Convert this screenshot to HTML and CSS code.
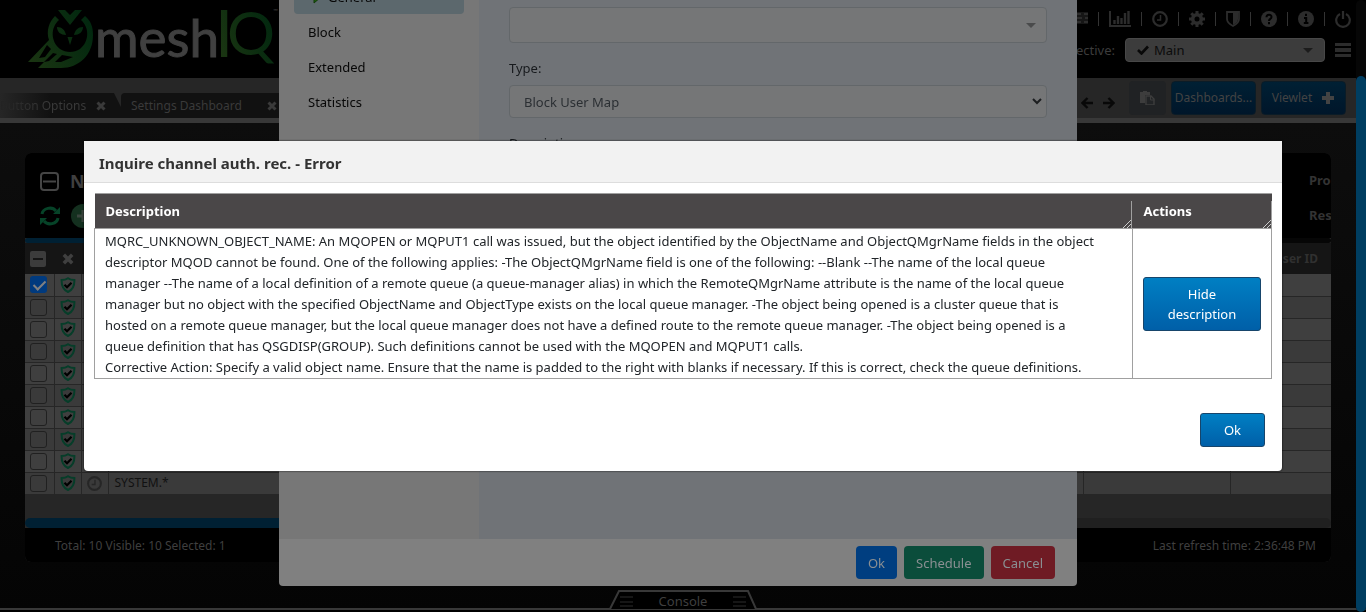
FILE: index.html
```html
<!DOCTYPE html>
<html lang="en">
<head>
<meta charset="utf-8">
<title>meshIQ</title>
<link rel="stylesheet" href="styles.css">
</head>
<body>
<svg class="defs" aria-hidden="true">
  <symbol id="shield-check" viewBox="0 0 16 16"><path d="M8 1.2C6 2.6 4 3 1.6 3c-.2 6 1.400 9.800 6.400 12C13 12.800 14.600 9 14.400 3 12 3 10 2.600 8 1.200z" fill="none" stroke="#063d29" stroke-width="2"/><path d="M4.500 7.800l2.500 2.500 4.500-4.600" fill="none" stroke="#000" stroke-width="2.200"/></symbol>
  <symbol id="cross" viewBox="0 0 10 10"><path d="M1.500 1.500l7 7M8.500 1.500l-7 7" stroke="currentColor" stroke-width="3"/></symbol>
  <symbol id="clock" viewBox="0 0 16 16"><circle cx="8" cy="8" r="6.800" fill="none" stroke="currentColor" stroke-width="2.200"/><path d="M8.500 4v5H5" fill="none" stroke="currentColor" stroke-width="1.500"/></symbol>
</svg>
<div class="app">
  <header class="top">
    <svg class="logo" viewBox="0 0 290 78" role="img" aria-label="meshIQ">
      <defs><linearGradient id="leaf" gradientUnits="userSpaceOnUse" x1="30" y1="60" x2="92" y2="30"><stop offset="0" stop-color="#1a3512"/><stop offset="1" stop-color="#02280f"/></linearGradient>
      <linearGradient id="iq" gradientUnits="userSpaceOnUse" x1="220" y1="50" x2="276" y2="30"><stop offset="0" stop-color="#1a3512"/><stop offset="1" stop-color="#02280f"/></linearGradient></defs>
      <g fill="url(#leaf)">
        <path d="M58 10h7l5 5 5-5h7L70 25z"/>
        <path d="M55 16l4 4c-9 8-8 22 1 29 6 4 14 4 20 0 9-7 10-21 1-29l4-4c6 5 8 11 8 19 0 20-14 33-32 33H38l6-6H28l21-22c-3-9 0-18 6-24z"/>
        <path d="M57 27c5 0 8 3 9 8-5 0-9-3-9-8zM83 27c-5 0-8 3-9 8 5 0 9-3 9-8zM67.500 37h5L70 45z"/>
      </g>
      <path d="M47 45l4 4-6 8-6 1zM53 53l4 1-8 7-5 1zM62 55l11 2-12 5h-6z" fill="#000"/>
      <text x="95" y="57" class="word">mesh</text><text x="215" y="57" class="i" fill="url(#iq)">I</text><text x="227" y="55" class="q" fill="url(#iq)">Q</text>
      <text x="273" y="13" class="tm">™</text>
    </svg>
    <div class="tools">
      <div class="icons">
        <svg width="16" height="14" viewBox="0 0 16 14"><path d="M0 2h16M0 6h16M0 10h16" stroke="currentColor" stroke-width="3"/><path d="M9 2h3M10 6h3M9 10h3" stroke="#000"/></svg><i></i>
        <svg width="22" height="18" viewBox="0 0 22 18"><path d="M1 1v15h21" fill="none" stroke="currentColor" stroke-width="2"/><path d="M5.500 14V10M9 14V6M12.500 14V8M16 14V3M19.500 14V1" stroke="currentColor" stroke-width="2.400"/></svg><i></i>
        <svg width="16" height="16"><use href="#clock"/></svg><i></i>
        <svg width="16" height="16" viewBox="0 0 16 16"><circle cx="8" cy="8" r="4.300" fill="none" stroke="currentColor" stroke-width="3.600"/><g stroke="currentColor" stroke-width="3"><path d="M8 0v3M8 13v3M0 8h3M13 8h3M2.300 2.300l2.200 2.200M11.500 11.500l2.200 2.200M2.300 13.700l2.200-2.200M11.500 4.500l2.200-2.200"/></g></svg><i></i>
        <svg width="14" height="16" viewBox="0 0 14 16"><path d="M1 1h12v7c0 3-3 5.500-6 7-3-1.500-6-4-6-7z" fill="none" stroke="currentColor" stroke-width="1.800"/><path d="M7 2h5v6c0 3-2 4.500-5 6z" fill="currentColor"/></svg><i></i>
        <svg width="16" height="16" viewBox="0 0 16 16"><circle cx="8" cy="8" r="8" fill="currentColor"/><path d="M5.500 6.200C5.500 3 10.500 3 10.500 6c0 2-2.500 1.800-2.500 4M8 11v2.200" fill="none" stroke="#000" stroke-width="2"/></svg><i></i>
        <svg width="16" height="16" viewBox="0 0 16 16"><circle cx="8" cy="8" r="8" fill="currentColor"/><path d="M8 2.800v2.200M6 7h2.200v5M5.800 12h4.600" fill="none" stroke="#000" stroke-width="2"/></svg><i></i>
        <svg width="16" height="18" viewBox="0 0 16 18"><path d="M5 4a6.800 6.800 0 1 0 6 0M8 1v8" fill="none" stroke="currentColor" stroke-width="2.200"/></svg>
      </div>
      <div class="persp">
        <label for="persp">Perspective:</label>
        <span class="pick"><svg width="12" height="10" viewBox="0 0 12 10"><path d="M1 5l3.500 3.500L11 1.500" fill="none" stroke="#080808" stroke-width="2.600"/></svg><select id="persp"><option>Main</option></select><b class="caret"></b></span>
        <button class="bars" aria-label="Menu"></button>
      </div>
    </div>
  </header>
  <nav class="tabs">
    <a href="#" class="tab first"><span>Button Options</span><svg width="10" height="10"><use href="#cross"/></svg></a>
    <a href="#" class="tab second"><span>Settings Dashboard</span><svg width="10" height="10"><use href="#cross"/></svg></a>
    <div class="actions">
      <svg class="arrow" width="12" height="12" viewBox="0 0 12 12"><path d="M12 6H2M6.500 1L1.500 6l5 5" fill="none" stroke="#080808" stroke-width="2.400"/></svg>
      <svg class="arrow" width="12" height="12" viewBox="0 0 12 12"><path d="M0 6h10M5.500 1l5 5-5 5" fill="none" stroke="#080808" stroke-width="2.400"/></svg>
      <button class="paste" aria-label="Paste"><svg width="15" height="14" viewBox="0 0 15 14"><path d="M0 1h3V0h4v1h3v3H5v8H0z" fill="#3d3d3d"/><path d="M6 5h5l3 3v6H6z" fill="#222426" stroke="#3d3d3d" stroke-width="1.400"/><path d="M10.500 5v4h4" fill="none" stroke="#3d3d3d"/></svg></button>
      <button class="navy">Dashboards...</button>
      <button class="navy">Viewlet <svg width="14" height="14" viewBox="0 0 14 14"><path d="M7 1v12M1 7h12" stroke="currentColor" stroke-width="4"/></svg></button>
    </div>
  </nav>
  <main>
    <section class="panel">
      <div class="phead">
        <div class="pleft">
          <div class="ptitle"><svg width="19" height="19" viewBox="0 0 19 19"><rect x="1" y="1" width="17" height="17" rx="3" fill="none" stroke="#454545" stroke-width="2"/><path d="M3 9.500h13" stroke="#454545" stroke-width="2"/></svg><h2>New</h2></div>
          <div class="ptools">
            <svg width="20" height="20" viewBox="0 0 20 20"><path d="M2 8c1-6 10-8 14-3M18 12c-1 6-10 8-14 3" fill="none" stroke="#064328" stroke-width="3"/><path d="M20 1v7h-7zM0 19v-7h7z" fill="#064328"/></svg>
            <svg width="24" height="24" viewBox="0 0 24 24"><circle cx="12" cy="12" r="12" fill="#14301f"/><path d="M12 6v12M6 12h12" stroke="#3a453e" stroke-width="3"/></svg>
          </div>
        </div>
        <div class="pright"><b>Properties</b><b>Reset</b></div>
      </div>
      <div class="track thin"></div>
      <table class="grid">
        <colgroup><col class="c1"><col class="c2"><col class="c3"><col><col class="c5"><col class="c6"></colgroup>
        <thead><tr><th><svg width="16" height="16" viewBox="0 0 16 16"><rect width="16" height="16" rx="2" fill="#3c3c3c"/><path d="M3 8h10" stroke="#151515" stroke-width="2"/></svg></th><th><svg width="12" height="12"><use href="#cross"/></svg></th><th></th><th></th><th></th><th class="uid">User ID</th></tr></thead>
        <tbody>
          <tr><td><input type="checkbox" checked aria-label="Row 1"></td><td><svg class="sh"><use href="#shield-check"/></svg></td><td></td><td></td><td></td><td></td></tr>
          <tr><td><input type="checkbox" aria-label="Row 2"></td><td><svg class="sh"><use href="#shield-check"/></svg></td><td></td><td></td><td></td><td></td></tr>
          <tr><td><input type="checkbox" aria-label="Row 3"></td><td><svg class="sh"><use href="#shield-check"/></svg></td><td></td><td></td><td></td><td></td></tr>
          <tr><td><input type="checkbox" aria-label="Row 4"></td><td><svg class="sh"><use href="#shield-check"/></svg></td><td></td><td></td><td></td><td></td></tr>
          <tr><td><input type="checkbox" aria-label="Row 5"></td><td><svg class="sh"><use href="#shield-check"/></svg></td><td></td><td></td><td></td><td></td></tr>
          <tr><td><input type="checkbox" aria-label="Row 6"></td><td><svg class="sh"><use href="#shield-check"/></svg></td><td></td><td></td><td></td><td></td></tr>
          <tr><td><input type="checkbox" aria-label="Row 7"></td><td><svg class="sh"><use href="#shield-check"/></svg></td><td></td><td></td><td></td><td></td></tr>
          <tr><td><input type="checkbox" aria-label="Row 8"></td><td><svg class="sh"><use href="#shield-check"/></svg></td><td></td><td></td><td></td><td></td></tr>
          <tr><td><input type="checkbox" aria-label="Row 9"></td><td><svg class="sh"><use href="#shield-check"/></svg></td><td></td><td></td><td></td><td></td></tr>
          <tr><td><input type="checkbox" aria-label="Row 10"></td><td><svg class="sh"><use href="#shield-check"/></svg></td><td><svg class="ck"><use href="#clock"/></svg></td><td class="name">SYSTEM.*</td><td></td><td></td></tr>
        </tbody>
      </table>
      <div class="blank"></div>
      <div class="track"></div>
      <footer class="pfoot"><span>Total: 10 Visible: 10 Selected: 1</span><span>Last refresh time: 2:36:48 PM</span></footer>
    </section>
  </main>
  <footer class="console">
    <button><svg width="148" height="20" viewBox="0 0 148 20"><path d="M0 19h1L10 1h129l8 18h1" fill="#000" stroke="#383838" stroke-width="2"/></svg><i class="grip"></i><span>Console</span><i class="grip"></i></button>
  </footer>
</div>
<div class="scroll"><div></div></div>

<div class="layer form-layer">
  <section class="form">
    <div class="fbody">
      <nav class="side">
        <a href="#" class="on"><svg width="14" height="14" viewBox="0 0 14 14"><path d="M1 5h5V1l7 6-7 6V9H1z" fill="#1d5c0c" stroke="#123a0a"/></svg>General</a>
        <a href="#">Block</a><a href="#">Extended</a><a href="#">Statistics</a>
      </nav>
      <div class="fields">
        <div class="combo"><input type="text" aria-label="Name"><b class="caret"></b></div>
        <label for="type">Type:</label>
        <div class="drop"><select id="type"><option>Block User Map</option></select><svg width="10" height="7" viewBox="0 0 10 7"><path d="M1 1l4 4 4-4" fill="none" stroke="#1c1e20" stroke-width="2"/></svg></div>
        <label for="desc">Description:</label>
        <input id="desc" class="text" type="text">
      </div>
    </div>
    <footer class="ffoot"><button class="ok">Ok</button><button class="sched">Schedule</button><button class="cancel">Cancel</button></footer>
  </section>
</div>

<div class="layer err-layer">
  <section class="error" role="dialog" aria-labelledby="et">
    <h1 id="et">Inquire channel auth. rec. - Error</h1>
    <div class="ebody">
      <table class="etable">
        <thead><tr><th><div>Description<svg class="rs" viewBox="0 0 8 8"><path d="M0 8l8-8M4 8l4-4" stroke="#ccc"/></svg></div></th><th><div>Actions<svg class="rs" viewBox="0 0 8 8"><path d="M0 8l8-8M4 8l4-4" stroke="#ccc"/></svg></div></th></tr></thead>
        <tbody><tr><td>MQRC_UNKNOWN_OBJECT_NAME: An MQOPEN or MQPUT1 call was issued, but the object identified by the ObjectName and ObjectQMgrName fields in the object<br>
descriptor MQOD cannot be found. One of the following applies: -The ObjectQMgrName field is one of the following: --Blank --The name of the local queue<br>
manager --The name of a local definition of a remote queue (a queue-manager alias) in which the RemoteQMgrName attribute is the name of the local queue<br>
manager but no object with the specified ObjectName and ObjectType exists on the local queue manager. -The object being opened is a cluster queue that is<br>
hosted on a remote queue manager, but the local queue manager does not have a defined route to the remote queue manager. -The object being opened is a<br>
queue definition that has QSGDISP(GROUP). Such definitions cannot be used with the MQOPEN and MQPUT1 calls.<br>
Corrective Action: Specify a valid object name. Ensure that the name is padded to the right with blanks if necessary. If this is correct, check the queue definitions.</td><td class="act"><button class="blue">Hide description</button></td></tr></tbody>
      </table>
    </div>
    <footer class="efoot"><button class="blue">Ok</button></footer>
  </section>
</div>
</body>
</html>
```
FILE: styles.css
```css
* { box-sizing: border-box; }
body { margin: 0; background: #060606; color: #3f3f3f; font: 13px/20px "Noto Sans", "Open Sans", sans-serif; overflow: hidden; }
button, input, select { font: inherit; color: inherit; margin: 0; }
button { cursor: pointer; }
a { color: inherit; text-decoration: none; }
svg { display: block; flex: none; }
.defs { position: absolute; width: 0; height: 0; }
.app { min-height: 100vh; display: flex; flex-direction: column; background: linear-gradient(#0d0d0d, #0d0d0d 20%, #040404); }

.top { display: flex; justify-content: space-between; background: #000; padding-right: 15px; }
.logo { width: 290px; height: 78px; }
.word { font: 53px Lato, sans-serif; fill: #404040; stroke: #404040; }
.i { font: 65px Lato, sans-serif; }
.q { font: 60px Lato, sans-serif; }
.tm { font: 6px Lato, sans-serif; fill: #404040; }
.tools { display: flex; flex-direction: column; align-items: flex-end; gap: 10px; padding-top: 10px; color: #2c2c2c; }
.icons { display: flex; align-items: center; gap: 10px; height: 18px; }
.icons i { width: 1px; height: 14px; background: #333; }
.persp { display: flex; align-items: center; gap: 10px; }
.persp label { color: #3c3c3c; }
.pick { display: grid; grid-template-columns: 12px 1fr 10px; align-items: center; width: 200px; height: 24px; padding: 0 11px; background: #3c3c3c; border: 1px solid #484848; border-radius: 4px; color: #0b0b0b; }
.pick select { appearance: none; background: none; border: 0; padding: 0 5px; line-height: 20px; }
.caret { border: 5px solid transparent; border-top-color: #1c1c1c; border-bottom: 0; }
.bars { width: 16px; height: 14px; padding: 0; border: solid #2c2c2c; border-width: 3px 0; background: linear-gradient(#000 2px, #2c2c2c 2px, #2c2c2c 6px, #000 6px); }

.tabs { display: flex; align-items: flex-end; height: 45px; padding-right: 20px; background: #262626; border-bottom: 5px solid #383838; color: #3a3a3a; font-size: 12px; }
.tab { display: flex; align-items: center; height: 25px; background: #111; }
.first { width: 121px; padding-left: 0; gap: 10px; clip-path: polygon(0 0, 114px 0, 100% 14px, 100% 100%, 0 100%); background: linear-gradient(90deg, #262626, #111 50px); }
.first span { background: linear-gradient(90deg, #222, #3a3a3a 50px); background-clip: text; color: transparent; }
.second { padding: 0 10px; gap: 25px; border-radius: 4px 0 0; flex: 0 0 200px; }
.actions { margin-left: auto; display: flex; align-items: center; gap: 5px; padding-bottom: 3px; }
.arrow { margin-right: 5px; position: relative; top: 5px; }
.arrow + .paste { margin-left: 4px; }
.actions button { display: flex; align-items: center; justify-content: center; height: 34px; border-radius: 4px; padding: 0; font-size: 12px; }
.actions .paste { width: 37px; background: #202224; border: 0; }
.navy { width: 85px; gap: 9px; color: #434343; background: linear-gradient(#002034, #00162a); border: 1px solid #0b1c27; }

main { flex: 1; padding: 30px 35px 28px 25px; }
.panel { border-radius: 6px; overflow: hidden; background: #262626; }
.phead { display: flex; justify-content: space-between; height: 85px; background: #000; }
.pleft { padding: 18px 15px; display: flex; flex-direction: column; gap: 15px; }
.ptitle, .ptools { display: flex; align-items: center; gap: 11px; height: 20px; }
h2 { margin: 0; font-size: 18px; }
.pright { display: flex; flex-direction: column; gap: 15px; width: 22px; padding-top: 17px; overflow: hidden; color: #333; }
.track { height: 10px; border-radius: 5px; background: linear-gradient(90deg, #002033 70%, #202020 70%); }
.track.thin { height: 5px; background: linear-gradient(90deg, #002033 70%, #060606 70%); }
.grid { width: 100%; table-layout: fixed; border-collapse: collapse; }
.c1 { width: 29px; } .c2 { width: 27px; } .c3 { width: 27px; } .c5 { width: 147px; } .c6 { width: 101px; }
.grid th { height: 31px; padding: 0; background: #151515; }
.grid th svg { margin: auto; }
.grid th:first-child svg { margin-left: 5px; }
.grid .uid { text-align: right; padding-right: 13px; font-size: 12px; color: #303030; }
.grid td { height: 22px; padding: 0; border: solid #262626; border-width: 0 1px 1px 0; background: #3f3f3f; }
.grid td:last-child { border-right: 0; }
.grid tr:nth-child(even) td { background: #3a3a3a; }
.grid input { display: block; appearance: none; width: 17px; height: 17px; margin-left: 5px; border: 1px solid #202020; border-radius: 3px; }
.grid input:checked { border: 0; background: #003a7e; }
.grid input:checked::after { content: ""; display: block; width: 5px; height: 10px; margin: 2px 6px; border: solid #808080; border-width: 0 2px 2px 0; transform: rotate(45deg); }
.sh { width: 16px; height: 16px; margin: auto; }
.ck { width: 15px; height: 15px; margin: auto; color: #262626; }
.grid .name { padding-left: 6px; color: #111; font-size: 12px; line-height: 16px; }
.blank { height: 23px; }
.pfoot { display: flex; justify-content: space-between; padding: 8px 15px 6px 30px; background: #000; font-size: 12px; }

.console { height: 22px; border-bottom: 2px solid #000; display: flex; justify-content: center; box-shadow: inset 0 -2px #383838; }
.console button { display: flex; align-items: center; justify-content: space-between; width: 148px; height: 20px; padding: 2px 11px 0; border: 0; background: none; position: relative; }
.console svg { position: absolute; left: 0; top: 0; }
.console span, .grip { position: relative; }
.grip { width: 13px; height: 11px; background: linear-gradient(#161616 2px, #000 2px, #000 5px, #161616 5px, #161616 7px, #000 7px, #000 9px, #161616 9px); }
.scroll { position: fixed; inset: 0 0 0 auto; width: 10px; padding-top: 76px; background: #060606; border-radius: 5px; }
.scroll div { height: 100%; border-radius: 5px; background: #003e61; }

.layer { position: fixed; inset: 0; display: flex; justify-content: center; }
.form-layer { right: 10px; align-items: flex-end; padding: 0 26px 26px; }
.form { width: 100%; max-width: 798px; border-radius: 4px; overflow: hidden; background: #808080; }
.fbody { display: flex; height: 560px; background: #707377; }
.side { flex: 0 0 200px; padding: 0 15px; background: #777; color: #070707; display: flex; flex-direction: column; }
.side a { display: flex; align-items: center; height: 35px; padding-left: 14px; }
.side .on { background: #5c686d; border-radius: 4px; gap: 6px; }
.fields { flex: 1; padding: 28px 30px 0; color: #171a1d; display: flex; flex-direction: column; }
.fields label { padding: 15px 0 7px; }
.combo, .drop { display: flex; align-items: center; height: 36px; padding: 0 10px 0 0; border: 1px solid #63676a; border-radius: 4px; background: #757677; }
.combo input, .drop select { flex: 1; appearance: none; border: 0; background: none; }
.combo .caret { border-top-color: #4a4b4c; }
.drop { height: 33px; padding-right: 4px; }
.drop select { padding: 0 14px; color: #2b2f33; }
.text { height: 33px; border: 1px solid #63676a; background: #757677; }
.ffoot { display: flex; justify-content: flex-end; gap: 7px; padding: 7px 22px; color: #8a8f92; }
.ffoot button { height: 33px; padding: 0 12px; border: 0; border-radius: 4px; }
.ok { background: #003e80; } .sched { background: #0b4d3b; } .cancel { background: #6f1b24; }

.err-layer { align-items: center; padding: 0 84px; }
.error { flex: 1; background: #fff; color: #212529; border-radius: 0 0 4px 4px; box-shadow: 0 0 2px #000; }
h1 { margin: 0; padding: 12px 15px 9px; background: #f2f2f2; border-bottom: 1px solid #ddd; color: #333; font-size: 15px; line-height: 20px; }
.ebody { padding: 10px 10px 0; }
.etable { width: 100%; border-collapse: collapse; }
.etable th { height: 35px; padding: 7px 0 0; border: solid #a0a0a0; border-width: 1px 0; background: #4a4748; color: #fff; text-align: left; }
.etable th div { position: relative; padding: 0 10px 6px 11px; border-right: 1px solid #a0a0a0; line-height: 21px; margin-right: 1px; }
.etable th:last-child div { margin-right: 0; }
.rs { position: absolute; right: 0; bottom: 0; width: 8px; height: 8px; }
.etable td { border: 1px solid #a0a0a0; padding: 2px 10px 0; line-height: 21px; white-space: nowrap; }
.etable .act { width: 139px; padding: 0 10px; white-space: normal; }
.blue { color: #fff; background: linear-gradient(#007fc3, #005fa8); border: 1px solid #17456b; border-radius: 3px; padding: 6px 23px; line-height: 20px; }
.act .blue { width: 100%; }
.efoot { display: flex; justify-content: flex-end; padding: 34px 17px 24px; }
```
